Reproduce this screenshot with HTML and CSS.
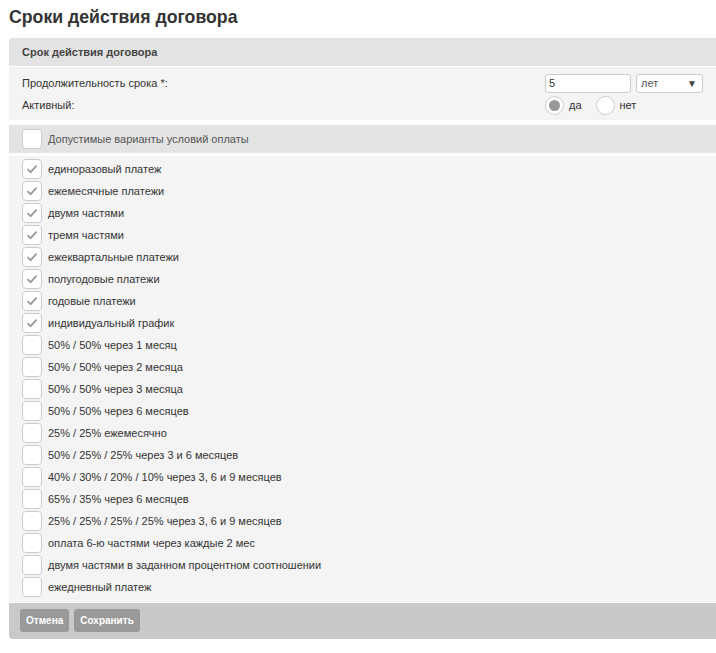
FILE: index.html
```html
<!DOCTYPE html>
<html lang="ru">
<head>
    <meta charset="UTF-8">
    <title>Сроки действия договора</title>
    <link rel="stylesheet" href="styles.css">
</head>
<body>
    <h1 class="page-title">Сроки действия договора</h1>

    <div class="panel">
        <div class="panel-header">Срок действия договора</div>

        <div class="term-section">
            <div class="term-row">
                <span class="term-label">Продолжительность срока *:</span>
                <div class="term-controls">
                    <input type="text" class="term-input" value="5">
                    <div class="term-select">
                        <span>лет</span>
                        <span class="select-arrow">&#9660;</span>
                    </div>
                </div>
            </div>
            <div class="term-row">
                <span class="term-label">Активный:</span>
                <div class="term-controls">
                    <label class="radio-item"><span class="radio checked"></span>да</label>
                    <label class="radio-item"><span class="radio"></span>нет</label>
                </div>
            </div>
        </div>

        <div class="options-header">
            <span class="checkbox"></span>
            <span>Допустимые варианты условий оплаты</span>
        </div>

        <ul class="options-list" id="optionsList"></ul>

        <div class="panel-footer">
            <button class="btn">Отмена</button>
            <button class="btn">Сохранить</button>
        </div>
    </div>

    <script>
        const options = [
            ['единоразовый платеж', true],
            ['ежемесячные платежи', true],
            ['двумя частями', true],
            ['тремя частями', true],
            ['ежеквартальные платежи', true],
            ['полугодовые платежи', true],
            ['годовые платежи', true],
            ['индивидуальный график', true],
            ['50% / 50% через 1 месяц', false],
            ['50% / 50% через 2 месяца', false],
            ['50% / 50% через 3 месяца', false],
            ['50% / 50% через 6 месяцев', false],
            ['25% / 25% ежемесячно', false],
            ['50% / 25% / 25% через 3 и 6 месяцев', false],
            ['40% / 30% / 20% / 10% через 3, 6 и 9 месяцев', false],
            ['65% / 35% через 6 месяцев', false],
            ['25% / 25% / 25% / 25% через 3, 6 и 9 месяцев', false],
            ['оплата 6-ю частями через каждые 2 мес', false],
            ['двумя частями в заданном процентном соотношении', false],
            ['ежедневный платеж', false]
        ];

        const checkSvg = '<svg width="14" height="14" viewBox="0 0 14 14"><path d="M2.5 7.2 L5.6 10.2 L11.6 3.6" fill="none" stroke="#9a9a9a" stroke-width="1.8"/></svg>';
        const list = document.getElementById('optionsList');

        options.forEach(([text, checked]) => {
            const li = document.createElement('li');
            li.className = 'option-item';
            li.innerHTML = '<span class="checkbox">' + (checked ? checkSvg : '') + '</span><span>' + text + '</span>';
            list.appendChild(li);
        });
    </script>
</body>
</html>
```

FILE: styles.css
```css
* {
    margin: 0;
    padding: 0;
    box-sizing: border-box;
}

body {
    font-family: 'Liberation Sans', Arial, sans-serif;
    font-size: 11px;
    color: #333;
    background-color: #fff;
}

.page-title {
    font-size: 17.7px;
    line-height: 22px;
    font-weight: bold;
    color: #333;
    padding: 6px 9px 0;
    margin-bottom: 10px;
}

.panel {
    margin-left: 9px;
}

.panel-header {
    background-color: #e3e3e3;
    height: 28px;
    line-height: 28px;
    padding-left: 13px;
    font-weight: bold;
    color: #444;
    border-radius: 3px 0 0 0;
}

.term-section {
    background-color: #f4f4f4;
    margin-top: 1px;
    padding: 5px 13px 4px 13px;
}

.term-row {
    display: flex;
    align-items: center;
    justify-content: space-between;
    height: 22px;
}

.term-controls {
    display: flex;
    align-items: center;
    width: 158px;
}

.term-input {
    width: 86px;
    height: 19px;
    border: 1px solid #ccc;
    border-radius: 3px;
    padding: 0 3px;
    font-family: inherit;
    font-size: 11px;
    color: #333;
}

.term-select {
    display: flex;
    justify-content: space-between;
    align-items: center;
    width: 67px;
    height: 19px;
    margin-left: 5px;
    border: 1px solid #ccc;
    border-radius: 3px;
    background-color: #fff;
    padding: 0 5px 0 4px;
    color: #555;
}

.select-arrow {
    font-size: 10px;
    color: #444;
}

.radio-item {
    display: flex;
    align-items: center;
    margin-right: 14px;
    color: #333;
}

.radio {
    width: 19px;
    height: 19px;
    border: 1px solid #ccc;
    border-radius: 50%;
    background-color: #fff;
    margin-right: 5px;
    display: flex;
    align-items: center;
    justify-content: center;
}

.radio.checked::after {
    content: '';
    width: 11px;
    height: 11px;
    border-radius: 50%;
    background-color: #999;
}

.options-header {
    display: flex;
    align-items: center;
    background-color: #e3e3e3;
    height: 28px;
    margin-top: 5px;
    padding-left: 13px;
    color: #555;
}

.checkbox {
    width: 20px;
    height: 20px;
    flex-shrink: 0;
    border: 1px solid #ccc;
    border-radius: 4px;
    background-color: #fff;
    margin-right: 6px;
    display: flex;
    align-items: center;
    justify-content: center;
}

.options-list {
    list-style: none;
    background-color: #f4f4f4;
    margin-top: 3px;
    padding: 3px 0 5px 13px;
}

.option-item {
    display: flex;
    align-items: center;
    height: 20px;
    margin-bottom: 2px;
    color: #333;
}

.option-item:last-child {
    margin-bottom: 0;
}

.panel-footer {
    display: flex;
    gap: 5px;
    background-color: #c9c9c9;
    margin-top: 1px;
    padding: 6px 11px 7px;
    border-radius: 0 0 0 4px;
}

.btn {
    height: 23px;
    padding: 0 6px;
    border: none;
    border-radius: 3px;
    background-color: #999;
    color: #fff;
    font-family: inherit;
    font-size: 10px;
    font-weight: bold;
}
```
